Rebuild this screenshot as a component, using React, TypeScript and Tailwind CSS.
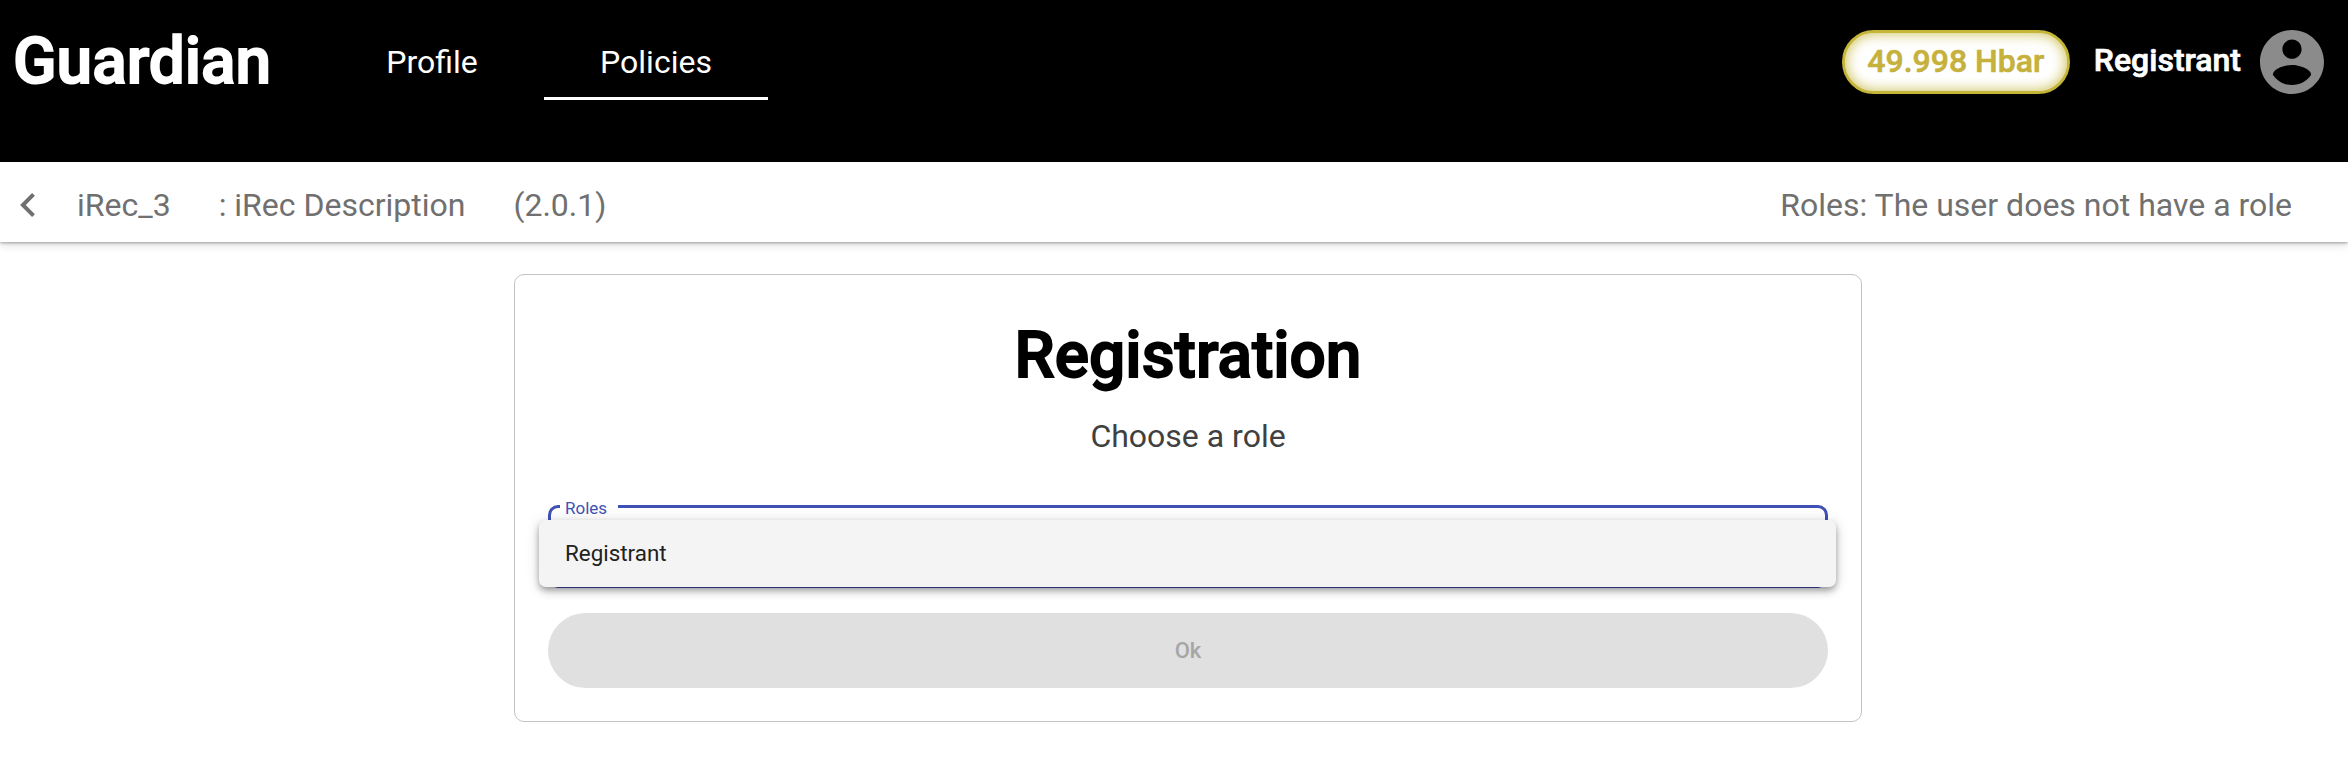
function BackIcon() {
  return (
    <svg viewBox="8 6 7.41 12" className="h-6 w-[15px] fill-[#707070]" aria-hidden="true">
      <path d="M15.41 7.41L14 6l-6 6 6 6 1.41-1.41L10.83 12z" />
    </svg>
  );
}

function AccountIcon() {
  return (
    <svg viewBox="2 2 20 20" className="h-16 w-16 fill-[#8b8b8b]" aria-hidden="true">
      <path d="M12 2C6.48 2 2 6.48 2 12s4.48 10 10 10 10-4.48 10-10S17.52 2 12 2zm0 3c1.66 0 3 1.34 3 3s-1.34 3-3 3-3-1.34-3-3 1.34-3 3-3zm0 14.2c-2.5 0-4.71-1.28-6-3.22.03-1.99 4-3.08 6-3.08 1.99 0 5.97 1.09 6 3.08-1.29 1.94-3.5 3.22-6 3.22z" />
    </svg>
  );
}

function Header() {
  return (
    <header className="flex h-[162px] items-start bg-black pl-[13px] text-white">
      <div className="mt-[30px] w-[317px] text-[64px] leading-16 font-medium [-webkit-text-stroke:1.8px_white]">
        Guardian
      </div>
      <nav className="mt-[24px] flex gap-[10px] text-[32px] leading-[76px]">
        <a className="flex h-[76px] w-[204px] justify-center">Profile</a>
        <a className="flex h-[76px] w-[224px] justify-center border-b-3 border-white">Policies</a>
      </nav>
      <div className="mt-[30px] ml-auto flex h-16 items-center pr-6">
        <div className="h-16 w-[228px] rounded-full border-3 border-[#c5b63a] bg-white text-center text-[32px] leading-[56px] font-medium text-[#c5b13c] shadow-[inset_0_0_14px_#c8bb4a] [-webkit-text-stroke:0.6px_#c5b13c]">
          49.998 Hbar
        </div>
        <div className="mr-[19px] ml-6 h-16 text-[32px] leading-[60px] font-medium [-webkit-text-stroke:0.7px_white]">
          Registrant
        </div>
        <AccountIcon />
      </div>
    </header>
  );
}

function PolicyBar() {
  return (
    <div className="flex h-20 items-center bg-white pr-14 pb-px pl-5 text-[32px] text-[#707070] shadow-[0_1px_3px_rgba(0,0,0,0.34),0_3px_10px_rgba(0,0,0,0.12)]">
      <div className="flex w-[57px] items-center pt-[7px]">
        <BackIcon />
      </div>
      <div className="flex flex-1 items-center gap-12 pt-[6px]">
        <span>iRec_3</span>
        <span>: iRec Description</span>
        <span>(2.0.1)</span>
        <span className="ml-auto">Roles: The user does not have a role</span>
      </div>
    </div>
  );
}

function RoleSelect() {
  return (
    <div className="relative mt-[45px]">
      <div className="flex h-[83px]">
        <div className="w-3 rounded-l-[10px] border-3 border-r-0 border-[#3f51b5]" />
        <div className="w-[58px] border-b-3 border-[#3f51b5] pl-[5px] text-[17px] leading-[6px] text-[#3f51b5]">
          Roles
        </div>
        <div className="flex-1 rounded-r-[10px] border-3 border-l-0 border-[#3f51b5]" />
      </div>
      <div className="absolute top-[15px] -right-[8px] -left-[9px] h-[67px] rounded-[7px] bg-[#f4f4f4] pl-[26px] text-[22.4px] leading-[67px] text-[#212121] shadow-[0_3px_6px_-1px_rgba(0,0,0,0.3),0_5px_8px_rgba(0,0,0,0.14),0_1px_15px_rgba(0,0,0,0.12)]">
        Registrant
      </div>
    </div>
  );
}

export default function App() {
  return (
    <div className="min-h-[784px] bg-white font-['Roboto',sans-serif]">
      <Header />
      <PolicyBar />
      <main className="mt-8 ml-[514px] flex h-[448px] w-[1348px] flex-col rounded-[10px] border border-[#c4c4c4] px-[33px] pt-[43px]">
        <h1 className="text-center text-[64px] leading-[76px] font-medium text-black [-webkit-text-stroke:1.8px_black]">
          Registration
        </h1>
        <p className="mt-[18px] text-center text-[32px] leading-12 text-[#404040]">Choose a role</p>
        <RoleSelect />
        <button className="mt-[25px] h-[75px] shrink-0 rounded-full bg-[#e0e0e0] text-[22px] font-medium text-[#a6a6a6]">
          Ok
        </button>
      </main>
    </div>
  );
}
